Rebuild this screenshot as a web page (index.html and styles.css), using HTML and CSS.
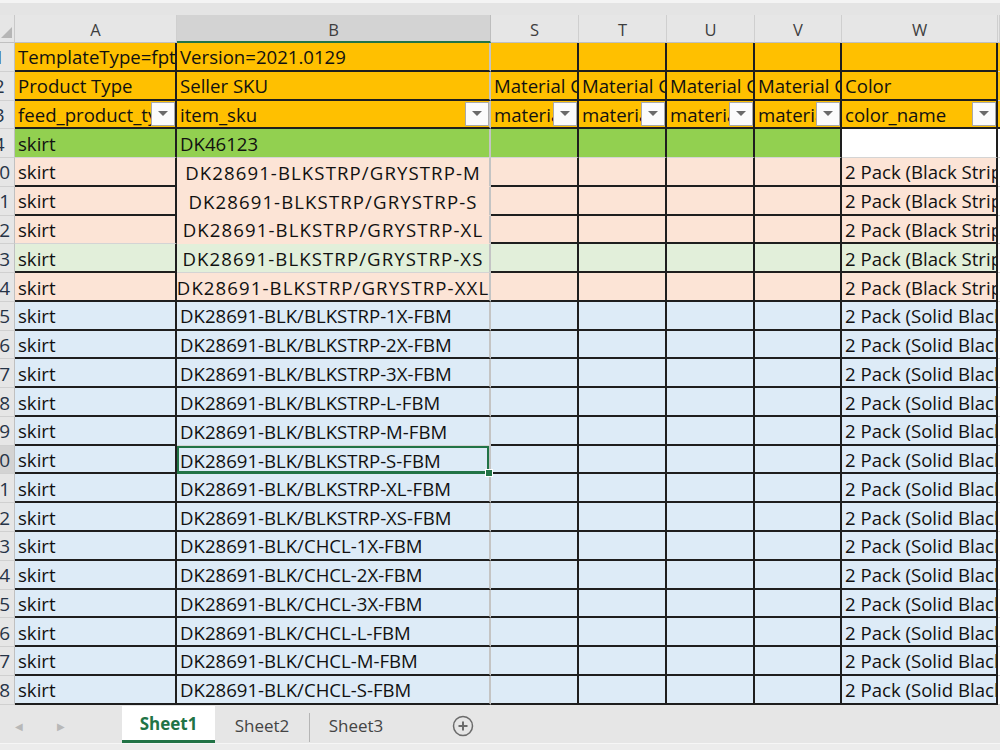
FILE: index.html
```html
<!DOCTYPE html>
<html>
<head>
<meta charset="utf-8">
<link rel="stylesheet" href="styles.css">
</head>
<body>
<div class="top"></div>
<div class="sheet">
  <div class="corner"><i class="tri"></i></div>
  <div class="ch">A</div><div class="ch selc">B</div><div class="ch">S</div><div class="ch">T</div><div class="ch">U</div><div class="ch">V</div><div class="ch">W</div><div class="ch"></div>

  <div class="rh"><span>1</span></div>
  <div class="c o kr kb">TemplateType=fptcustom</div><div class="c o kb hb">Version=2021.0129</div><div class="c o kr kb"></div><div class="c o kr kb"></div><div class="c o kr kb"></div><div class="c o kr kb"></div><div class="c o kr kb"></div><div class="c o"></div>

  <div class="rh"><span>2</span></div>
  <div class="c o kr kb">Product Type</div><div class="c o kb hb">Seller SKU</div><div class="c o kr kb">Material Composition</div><div class="c o kr kb">Material Composition</div><div class="c o kr kb">Material Composition</div><div class="c o kr kb">Material Composition</div><div class="c o kr kb">Color</div><div class="c o"></div>

  <div class="rh"><span>3</span></div>
  <div class="c o kr kb f"><span class="t">feed_product_type</span><i class="fb"></i></div><div class="c o kb hb f"><span class="t">item_sku</span><i class="fb"></i></div><div class="c o kr kb f"><span class="t">material_composition</span><i class="fb"></i></div><div class="c o kr kb f"><span class="t">material_composition</span><i class="fb"></i></div><div class="c o kr kb f"><span class="t">material_composition</span><i class="fb"></i></div><div class="c o kr kb f"><span class="t">material_composition</span><i class="fb"></i></div><div class="c o kr kb f"><span class="t">color_name</span><i class="fb"></i></div><div class="c o kb"></div>

  <div class="rh"><span>4</span></div>
  <div class="c g kr">skirt</div><div class="c g hb">DK46123</div><div class="c g kr"></div><div class="c g kr"></div><div class="c g kr"></div><div class="c g kr"></div><div class="c w kr"></div><div class="c w"></div>

  <div class="rh"><span>10</span></div>
  <div class="c p kr kb">skirt</div><div class="c p hb nb ctr">DK28691-BLKSTRP/GRYSTRP-M</div><div class="c p kr kb"></div><div class="c p kr kb"></div><div class="c p kr kb"></div><div class="c p kr kb"></div><div class="c p kr kb">2 Pack (Black Stripe/Grey Stripe)</div><div class="c w"></div>

  <div class="rh"><span>11</span></div>
  <div class="c p kr kb">skirt</div><div class="c p hb nb ctr">DK28691-BLKSTRP/GRYSTRP-S</div><div class="c p kr kb"></div><div class="c p kr kb"></div><div class="c p kr kb"></div><div class="c p kr kb"></div><div class="c p kr kb">2 Pack (Black Stripe/Grey Stripe)</div><div class="c w"></div>

  <div class="rh"><span>12</span></div>
  <div class="c p kr">skirt</div><div class="c p hb nb ctr">DK28691-BLKSTRP/GRYSTRP-XL</div><div class="c p kr kb"></div><div class="c p kr kb"></div><div class="c p kr kb"></div><div class="c p kr kb"></div><div class="c p kr kb">2 Pack (Black Stripe/Grey Stripe)</div><div class="c w"></div>

  <div class="rh"><span>13</span></div>
  <div class="c lg kr kb">skirt</div><div class="c lg hb ctr">DK28691-BLKSTRP/GRYSTRP-XS</div><div class="c lg kr kb"></div><div class="c lg kr kb"></div><div class="c lg kr kb"></div><div class="c lg kr kb"></div><div class="c lg kr kb">2 Pack (Black Stripe/Grey Stripe)</div><div class="c w"></div>

  <div class="rh"><span>14</span></div>
  <div class="c p kr kb">skirt</div><div class="c p hb kb ctr">DK28691-BLKSTRP/GRYSTRP-XXL</div><div class="c p kr kb"></div><div class="c p kr kb"></div><div class="c p kr kb"></div><div class="c p kr kb"></div><div class="c p kr kb">2 Pack (Black Stripe/Grey Stripe)</div><div class="c w"></div>

  <div class="rh"><span>15</span></div>
  <div class="c b kr kb">skirt</div><div class="c b hb kb">DK28691-BLK/BLKSTRP-1X-FBM</div><div class="c b kr kb"></div><div class="c b kr kb"></div><div class="c b kr kb"></div><div class="c b kr kb"></div><div class="c b kr kb">2 Pack (Solid Black/Black Stripe)</div><div class="c w"></div>

  <div class="rh"><span>16</span></div>
  <div class="c b kr kb">skirt</div><div class="c b hb kb">DK28691-BLK/BLKSTRP-2X-FBM</div><div class="c b kr kb"></div><div class="c b kr kb"></div><div class="c b kr kb"></div><div class="c b kr kb"></div><div class="c b kr kb">2 Pack (Solid Black/Black Stripe)</div><div class="c w"></div>

  <div class="rh"><span>17</span></div>
  <div class="c b kr kb">skirt</div><div class="c b hb kb">DK28691-BLK/BLKSTRP-3X-FBM</div><div class="c b kr kb"></div><div class="c b kr kb"></div><div class="c b kr kb"></div><div class="c b kr kb"></div><div class="c b kr kb">2 Pack (Solid Black/Black Stripe)</div><div class="c w"></div>

  <div class="rh"><span>18</span></div>
  <div class="c b kr kb">skirt</div><div class="c b hb kb">DK28691-BLK/BLKSTRP-L-FBM</div><div class="c b kr kb"></div><div class="c b kr kb"></div><div class="c b kr kb"></div><div class="c b kr kb"></div><div class="c b kr kb">2 Pack (Solid Black/Black Stripe)</div><div class="c w"></div>

  <div class="rh"><span>19</span></div>
  <div class="c b kr kb">skirt</div><div class="c b hb">DK28691-BLK/BLKSTRP-M-FBM</div><div class="c b kr kb"></div><div class="c b kr kb"></div><div class="c b kr kb"></div><div class="c b kr kb"></div><div class="c b kr kb">2 Pack (Solid Black/Black Stripe)</div><div class="c w"></div>

  <div class="rh selr"><span>20</span></div>
  <div class="c b kr kb">skirt</div><div class="c b hb active">DK28691-BLK/BLKSTRP-S-FBM</div><div class="c b kr kb"></div><div class="c b kr kb"></div><div class="c b kr kb"></div><div class="c b kr kb"></div><div class="c b kr kb">2 Pack (Solid Black/Black Stripe)</div><div class="c w"></div>

  <div class="rh"><span>21</span></div>
  <div class="c b kr kb">skirt</div><div class="c b hb kb">DK28691-BLK/BLKSTRP-XL-FBM</div><div class="c b kr kb"></div><div class="c b kr kb"></div><div class="c b kr kb"></div><div class="c b kr kb"></div><div class="c b kr kb">2 Pack (Solid Black/Black Stripe)</div><div class="c w"></div>

  <div class="rh"><span>22</span></div>
  <div class="c b kr kb">skirt</div><div class="c b hb kb">DK28691-BLK/BLKSTRP-XS-FBM</div><div class="c b kr kb"></div><div class="c b kr kb"></div><div class="c b kr kb"></div><div class="c b kr kb"></div><div class="c b kr kb">2 Pack (Solid Black/Black Stripe)</div><div class="c w"></div>

  <div class="rh"><span>23</span></div>
  <div class="c b kr kb">skirt</div><div class="c b hb kb">DK28691-BLK/CHCL-1X-FBM</div><div class="c b kr kb"></div><div class="c b kr kb"></div><div class="c b kr kb"></div><div class="c b kr kb"></div><div class="c b kr kb">2 Pack (Solid Black/Charcoal)</div><div class="c w"></div>

  <div class="rh"><span>24</span></div>
  <div class="c b kr kb">skirt</div><div class="c b hb kb">DK28691-BLK/CHCL-2X-FBM</div><div class="c b kr kb"></div><div class="c b kr kb"></div><div class="c b kr kb"></div><div class="c b kr kb"></div><div class="c b kr kb">2 Pack (Solid Black/Charcoal)</div><div class="c w"></div>

  <div class="rh"><span>25</span></div>
  <div class="c b kr kb">skirt</div><div class="c b hb kb">DK28691-BLK/CHCL-3X-FBM</div><div class="c b kr kb"></div><div class="c b kr kb"></div><div class="c b kr kb"></div><div class="c b kr kb"></div><div class="c b kr kb">2 Pack (Solid Black/Charcoal)</div><div class="c w"></div>

  <div class="rh"><span>26</span></div>
  <div class="c b kr kb">skirt</div><div class="c b hb kb">DK28691-BLK/CHCL-L-FBM</div><div class="c b kr kb"></div><div class="c b kr kb"></div><div class="c b kr kb"></div><div class="c b kr kb"></div><div class="c b kr kb">2 Pack (Solid Black/Charcoal)</div><div class="c w"></div>

  <div class="rh"><span>27</span></div>
  <div class="c b kr kb">skirt</div><div class="c b hb kb">DK28691-BLK/CHCL-M-FBM</div><div class="c b kr kb"></div><div class="c b kr kb"></div><div class="c b kr kb"></div><div class="c b kr kb"></div><div class="c b kr kb">2 Pack (Solid Black/Charcoal)</div><div class="c w"></div>

  <div class="rh"><span>28</span></div>
  <div class="c b kr kb">skirt</div><div class="c b hb kb">DK28691-BLK/CHCL-S-FBM</div><div class="c b kr kb"></div><div class="c b kr kb"></div><div class="c b kr kb"></div><div class="c b kr kb"></div><div class="c b kr kb">2 Pack (Solid Black/Charcoal)</div><div class="c w"></div>
</div>
<div class="tabs">
  <div class="nav"><span class="arr">&#9664;</span><span class="arr">&#9654;</span></div>
  <div class="tab on">Sheet1</div>
  <div class="tab">Sheet2</div>
  <div class="tab">Sheet3</div>
  <div class="add">
    <svg width="22" height="22" viewBox="0 0 22 22"><circle cx="11" cy="11" r="9.5" fill="none" stroke="#6b6b6b" stroke-width="1.5"/><path d="M11 6.5v9M6.5 11h9" stroke="#6b6b6b" stroke-width="2"/></svg>
  </div>
</div>
<div class="bottom"></div>
</body>
</html>
```

FILE: styles.css
```css
* { box-sizing: border-box; }
html, body { margin: 0; padding: 0; }
body {
  width: 1000px;
  height: 750px;
  overflow: hidden;
  background: #e6e6e6;
  font-family: "Open Sans", "Noto Sans", sans-serif;
  color: #111;
}
.top {
  height: 15px;
  background: #e4e4e4;
  border-top: 3px solid #f4f4f4;
}
.sheet {
  display: grid;
  grid-template-columns: 15px 162px 314px 88px 88px 88px 87px 156px 2px;
  grid-template-rows: 28px repeat(23, 28.78px);
  background: #fff;
  font-size: 18.6px;
}
.corner {
  background: #e6e6e6;
  border-right: 1px solid #c9c9c9;
  border-bottom: 1px solid #c0c0c0;
  display: flex;
  align-items: flex-end;
  justify-content: flex-end;
  padding: 0 2px 4px 0;
}
.tri {
  width: 0;
  height: 0;
  border-left: 11px solid transparent;
  border-bottom: 11px solid #b6b6b6;
}
.ch {
  background: #e6e6e6;
  border-right: 1px solid #cfcfcf;
  border-bottom: 1px solid #c0c0c0;
  display: flex;
  align-items: center;
  justify-content: center;
  font-size: 16.5px;
  color: #3e3e3e;
  padding-top: 2px;
}
.ch.selc {
  background: #d3d3d3;
  border-bottom: 2px solid #217346;
  border-right-color: #bdbdbd;
}
.rh {
  background: #e6e6e6;
  border-right: 1px solid #c0c0c0;
  border-bottom: 1px solid #d0d0d0;
  overflow: hidden;
  display: flex;
  align-items: center;
  font-size: 19px;
  color: #263447;
  padding-top: 1px;
}
.rh span {
  flex: none;
  width: 74px;
  margin-left: -37.8px;
  text-align: center;
}
.rh.selr { background: #d3d3d3; }
.c {
  border-right: 1px solid #d4d4d4;
  border-bottom: 1px solid #d4d4d4;
  display: flex;
  align-items: center;
  padding: 1px 3px 0 3px;
  overflow: hidden;
  white-space: nowrap;
}
.o { background: #ffc000; }
.g { background: #92d050; }
.p { background: #fce4d6; }
.lg { background: #e2efda; }
.b { background: #ddebf7; }
.w { background: #ffffff; }
.kr { border-right: 2px solid #1e1e1e; }
.kb { border-bottom: 2px solid #1e1e1e; }
.hb { border-right: 2px solid #c4c4c4; }
.p.nb { border-bottom-color: #fce4d6; }
.ctr {
  justify-content: center;
  letter-spacing: 1.1px;
  padding: 1px 0 0 0;
}
.f { padding: 0 0 0 3px; }
.f .t {
  flex: 1;
  min-width: 0;
  overflow: hidden;
  padding-top: 1px;
}
.fb {
  flex: none;
  width: 24px;
  height: 24px;
  background: #fbfbfb;
  border: 1px solid #a9a9a9;
  display: flex;
  align-items: center;
  justify-content: center;
}
.fb::after {
  content: "";
  width: 0;
  height: 0;
  border-left: 5px solid transparent;
  border-right: 5px solid transparent;
  border-top: 5px solid #6a6a6a;
}
.active {
  position: relative;
  overflow: visible;
  box-shadow: inset 0 0 0 2px #217346;
  border-bottom: 1px solid #217346;
}
.active::after {
  content: "";
  position: absolute;
  right: -4px;
  bottom: -4px;
  width: 6px;
  height: 6px;
  background: #217346;
  border: 1px solid #fff;
}
.tabs {
  height: 37px;
  margin-top: 1px;
  display: flex;
  align-items: stretch;
  background: #e6e6e6;
  font-size: 17px;
  color: #444;
}
.nav {
  width: 122px;
  display: flex;
  align-items: center;
  gap: 34px;
  padding: 4px 0 0 15px;
  font-size: 10px;
  color: #b8b8b8;
}
.tab {
  display: flex;
  align-items: center;
  justify-content: center;
  width: 94px;
  padding-top: 3px;
  position: relative;
}
.tab + .tab::before {
  content: "";
  position: absolute;
  left: 0;
  top: 7px;
  bottom: 1px;
  width: 1px;
  background: #b5b5b5;
}
.tab.on + .tab::before { display: none; }
.tab:last-of-type::after {
  content: "";
  position: absolute;
  right: 0;
  top: 7px;
  bottom: 1px;
  width: 1px;
  background: #b5b5b5;
}
.tab.on {
  width: 93px;
  background: #fff;
  color: #217346;
  font-weight: 700;
  border-bottom: 3px solid #217346;
  padding-top: 2px;
}
.add {
  display: flex;
  align-items: center;
  padding: 4px 0 0 49px;
}
.bottom {
  height: 14px;
  border-top: 1px solid #f6f6f6;
  background: #ececec;
}
```
